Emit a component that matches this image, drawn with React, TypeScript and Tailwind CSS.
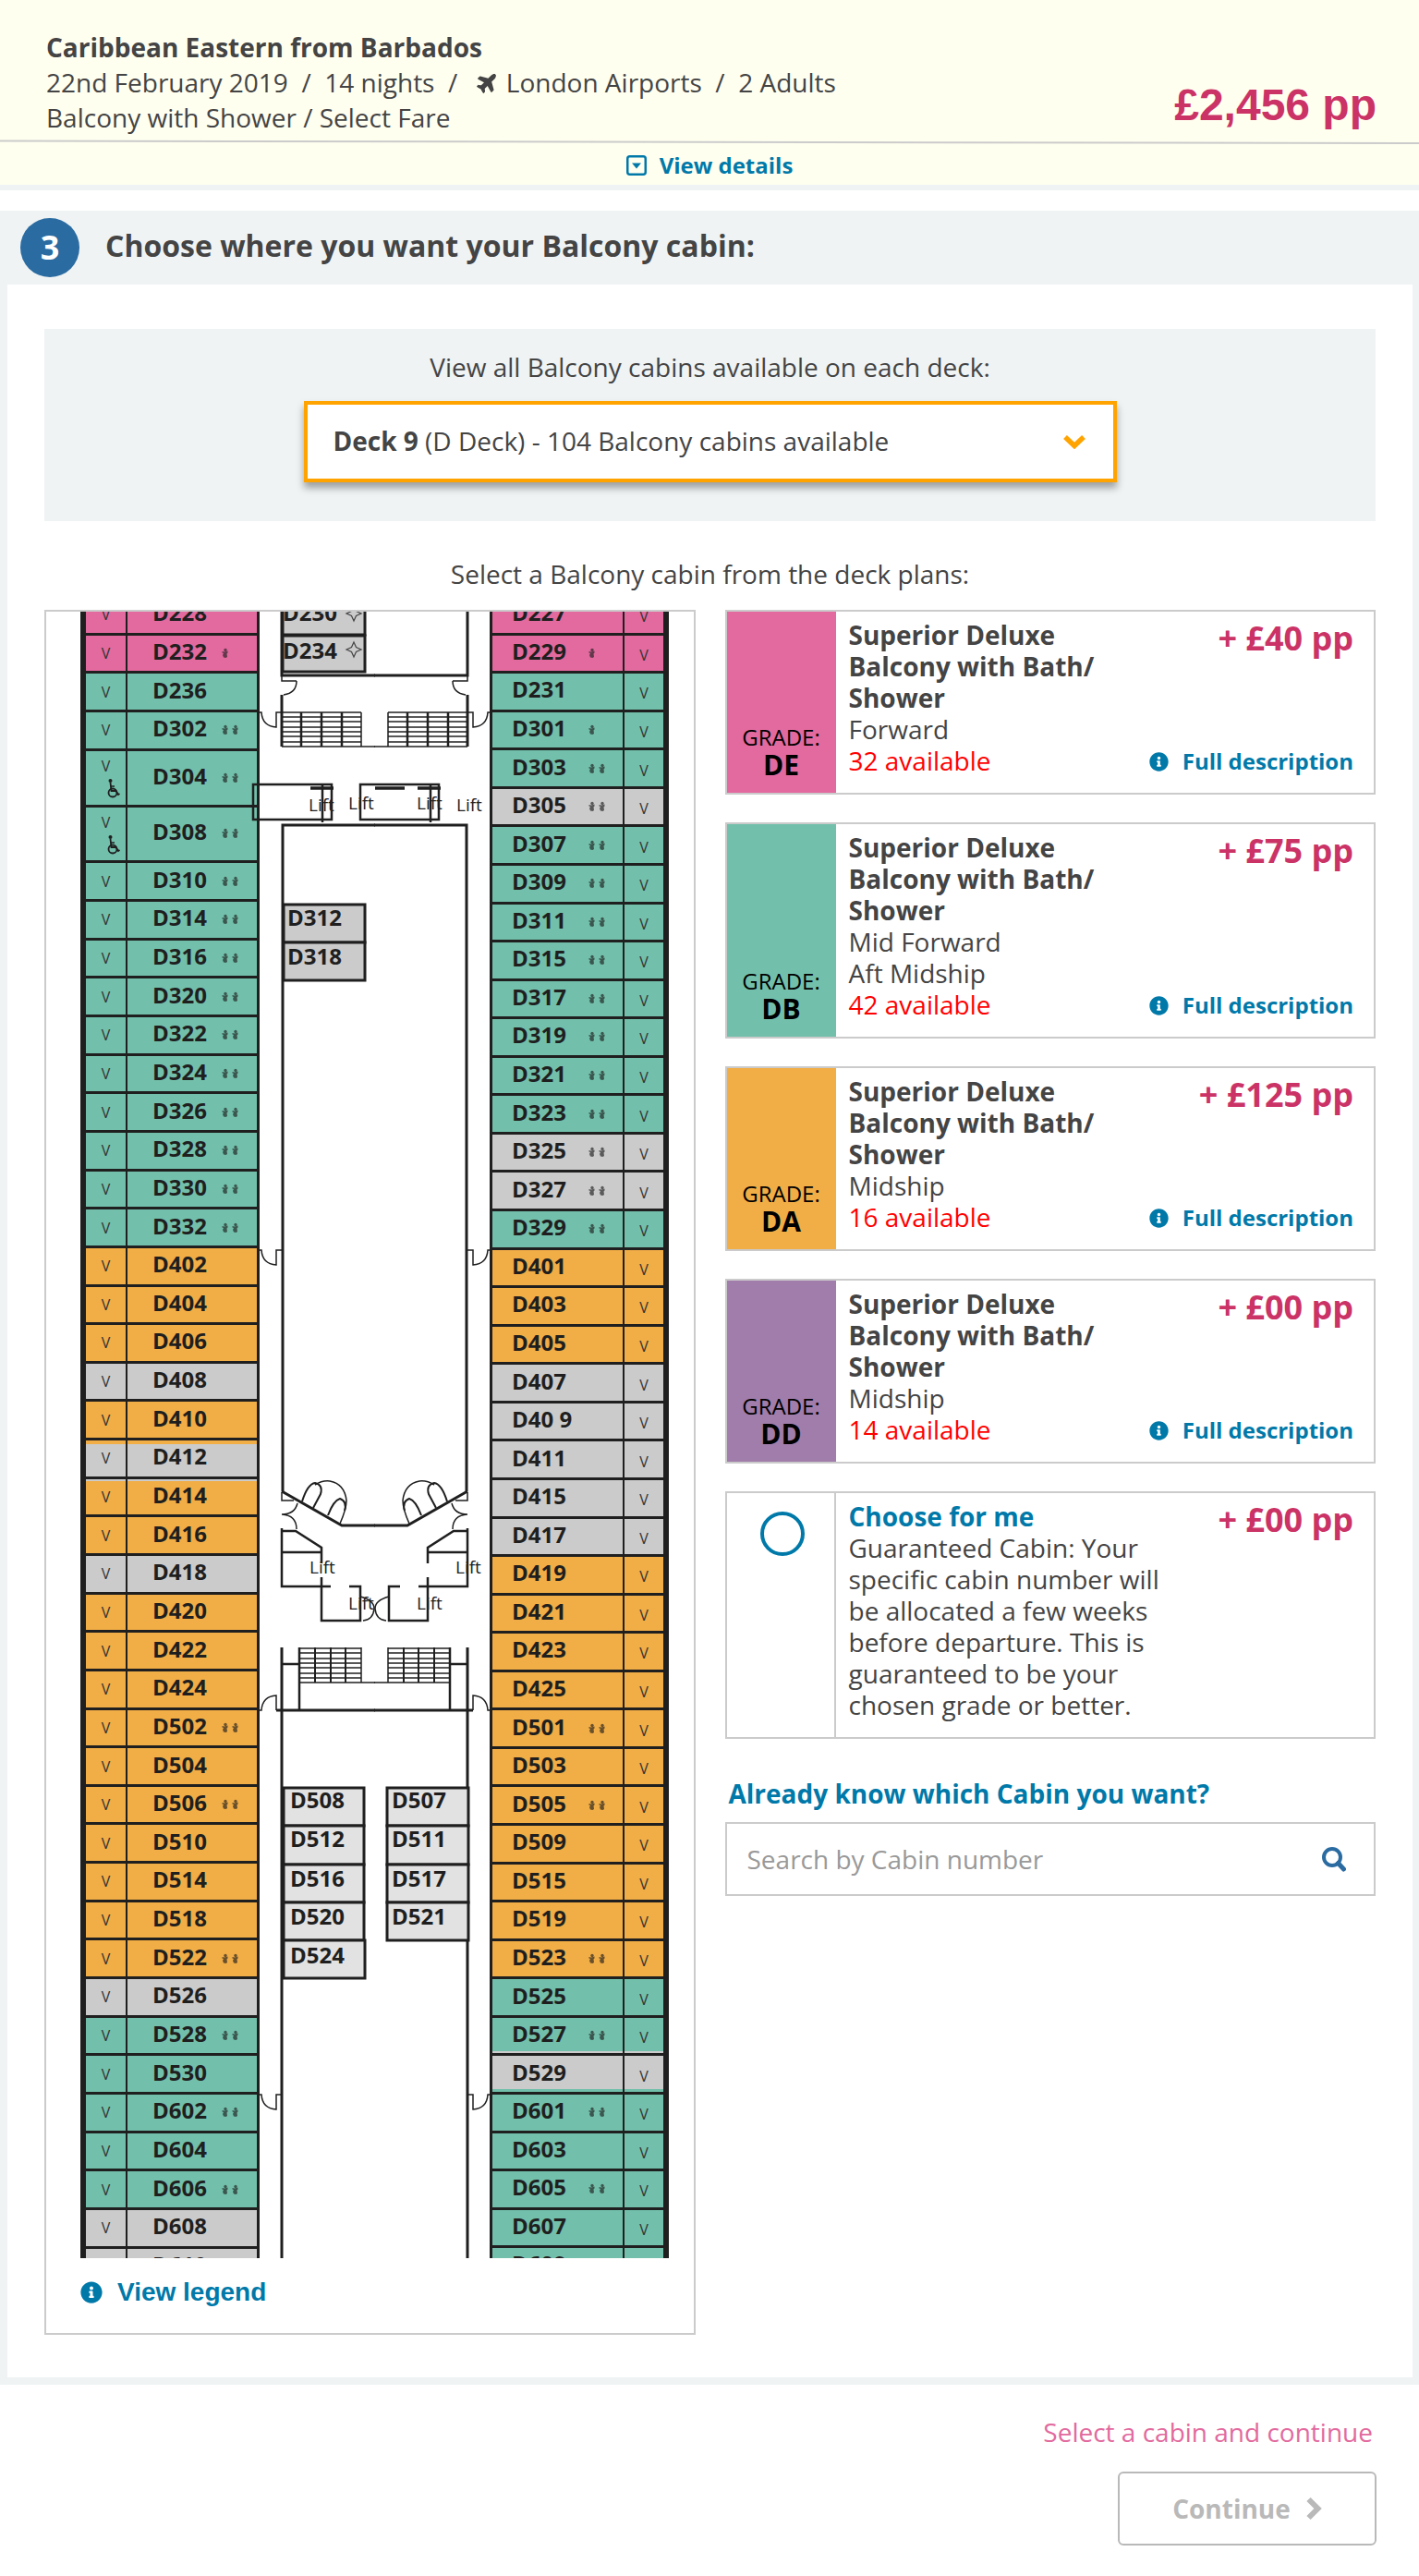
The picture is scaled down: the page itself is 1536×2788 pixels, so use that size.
import React from "react";
import { FaInfoCircle, FaPlane } from "react-icons/fa";

type Tone = "pink" | "teal" | "orange" | "grey";

type Cabin = {
  name: string;
  tone: Tone;
  marks?: number;
  accessible?: boolean;
};

const toneClass: Record<Tone, string> = {
  pink: "bg-[#e26a9e]",
  teal: "bg-[#72c0ab]",
  orange: "bg-[#f1ad46]",
  grey: "bg-[#cbcbcb]",
};

/* Thin strips where a neighbouring grade's colour runs over the cabin line. */
const edgeClass: Record<string, string> = {
  D412: "shadow-[inset_0_4px_0_#f1ad46]",
  D414: "shadow-[inset_0_2px_0_#cbcbcb]",
  D527: "shadow-[inset_0_-2px_0_#cbcbcb]",
  D529: "shadow-[inset_0_-3px_0_#72c0ab]",
};

const c = (name: string, tone: Tone, marks = 0, accessible = false): Cabin => ({
  name,
  tone,
  marks,
  accessible,
});

const portCabins: Cabin[] = [
  c("D228", "pink"),
  c("D232", "pink", 1),
  c("D236", "teal"),
  c("D302", "teal", 2),
  c("D304", "teal", 2, true),
  c("D308", "teal", 2, true),
  c("D310", "teal", 2),
  c("D314", "teal", 2),
  c("D316", "teal", 2),
  c("D320", "teal", 2),
  c("D322", "teal", 2),
  c("D324", "teal", 2),
  c("D326", "teal", 2),
  c("D328", "teal", 2),
  c("D330", "teal", 2),
  c("D332", "teal", 2),
  c("D402", "orange"),
  c("D404", "orange"),
  c("D406", "orange"),
  c("D408", "grey"),
  c("D410", "orange"),
  c("D412", "grey"),
  c("D414", "orange"),
  c("D416", "orange"),
  c("D418", "grey"),
  c("D420", "orange"),
  c("D422", "orange"),
  c("D424", "orange"),
  c("D502", "orange", 2),
  c("D504", "orange"),
  c("D506", "orange", 2),
  c("D510", "orange"),
  c("D514", "orange"),
  c("D518", "orange"),
  c("D522", "orange", 2),
  c("D526", "grey"),
  c("D528", "teal", 2),
  c("D530", "teal"),
  c("D602", "teal", 2),
  c("D604", "teal"),
  c("D606", "teal", 2),
  c("D608", "grey"),
  c("D610", "grey", 2),
];

const starboardCabins: Cabin[] = [
  c("D227", "pink"),
  c("D229", "pink", 1),
  c("D231", "teal"),
  c("D301", "teal", 1),
  c("D303", "teal", 2),
  c("D305", "grey", 2),
  c("D307", "teal", 2),
  c("D309", "teal", 2),
  c("D311", "teal", 2),
  c("D315", "teal", 2),
  c("D317", "teal", 2),
  c("D319", "teal", 2),
  c("D321", "teal", 2),
  c("D323", "teal", 2),
  c("D325", "grey", 2),
  c("D327", "grey", 2),
  c("D329", "teal", 2),
  c("D401", "orange"),
  c("D403", "orange"),
  c("D405", "orange"),
  c("D407", "grey"),
  c("D40 9", "grey"),
  c("D411", "grey"),
  c("D415", "grey"),
  c("D417", "grey"),
  c("D419", "orange"),
  c("D421", "orange"),
  c("D423", "orange"),
  c("D425", "orange"),
  c("D501", "orange", 2),
  c("D503", "orange"),
  c("D505", "orange", 2),
  c("D509", "orange"),
  c("D515", "orange"),
  c("D519", "orange"),
  c("D523", "orange", 2),
  c("D525", "teal"),
  c("D527", "teal", 2),
  c("D529", "grey"),
  c("D601", "teal", 2),
  c("D603", "teal"),
  c("D605", "teal", 2),
  c("D607", "teal"),
  c("D609", "teal", 2),
];

/* Small berth symbols printed beside a cabin number. */
function Marks({ count }: { count: number }) {
  if (!count) return null;
  return (
    <svg width="20" height="12" viewBox="0 0 20 12" fill="#1f1f1f" opacity="0.65" aria-hidden="true">
      {Array.from({ length: count }, (_, i) => (
        <g key={i} transform={`translate(${i * 11} 0)`}>
          <circle cx="4" cy="2.5" r="1.7" />
          <path d="M0.5 4 L3 4.5 L6.5 3.5 L6.5 5.5 L5.5 6.5 L6 10 L4.5 11 L2 10.5 L1 8 L2 6 L0.5 5.5 Z" />
        </g>
      ))}
    </svg>
  );
}

/* Upright wheelchair symbol used on the accessible cabins. */
function AccessibleIcon() {
  return (
    <svg width="14" height="21" viewBox="0 0 14 21" fill="none" stroke="#1f1f1f" className="ml-4" aria-hidden="true">
      <circle cx="3.5" cy="2" r="2" fill="#1f1f1f" stroke="none" />
      <path d="M3.5 4 L4.5 13 H9.5 L12 17 L13.5 16" strokeWidth="1.8" />
      <path d="M4 8 H8" strokeWidth="1.5" />
      <circle cx="6" cy="15" r="4.5" strokeWidth="1.8" />
    </svg>
  );
}

function CabinName({ cabin, side }: { cabin: Cabin; side: "port" | "starboard" }) {
  return (
    <span className={side === "port" ? "flex flex-1 items-center pl-[27px]" : "flex flex-1 items-center pl-[21px]"}>
      <span className={side === "port" ? "w-[75px] pb-1 text-left" : "w-[83px] pb-1 text-left"}>{cabin.name}</span>
      <Marks count={cabin.marks ?? 0} />
    </span>
  );
}

function ViewCell({ cabin, side }: { cabin: Cabin; side: "port" | "starboard" }) {
  return (
    <span
      className={
        side === "port"
          ? "flex w-[45px] flex-col items-center justify-center gap-1 border-r-2 border-[#1f1f1f] text-base leading-5 font-normal text-[#333]"
          : "flex w-[44px] flex-col items-center justify-center border-l-2 border-[#1f1f1f] pt-1 text-base leading-5 font-normal text-[#333]"
      }
    >
      V
      {cabin.accessible && <AccessibleIcon />}
    </span>
  );
}

function CabinColumn({ cabins, side }: { cabins: Cabin[]; side: "port" | "starboard" }) {
  return (
    <div
      className={
        side === "port"
          ? "flex w-[194px] flex-col border-r-[3px] border-l-[6px] border-[#1f1f1f]"
          : "flex w-[194px] flex-col border-r-[6px] border-l-[3px] border-[#1f1f1f]"
      }
    >
      {cabins.map((cabin) => (
        <button
          key={cabin.name}
          type="button"
          className={`${cabin.accessible ? "grow-[1.5]" : "grow"} ${toneClass[cabin.tone]} ${edgeClass[cabin.name] ?? ""} flex min-h-0 basis-0 items-stretch border-b-[3px] border-[#1f1f1f] text-2xl leading-8 font-bold text-[#1f1f1f]`}
        >
          {side === "port" && <ViewCell cabin={cabin} side={side} />}
          <CabinName cabin={cabin} side={side} />
          {side === "starboard" && <ViewCell cabin={cabin} side={side} />}
        </button>
      ))}
    </div>
  );
}

/* Left half of the walls, doors, lifts and stairs; the right half mirrors it. */
function HalfWalls() {
  return (
    <g fill="none" stroke="#1f1f1f">
      <g strokeWidth="3">
        <path d="M305 662 V731 H406" />
        <path d="M305 752 V808" />
        <path d="M306 1614 V893 H406" />
        <path d="M305 1614 L370 1651 H406" />
        <path d="M305 1783 V2444" />
        <path d="M299 1851 H406" />
      </g>
      <g strokeWidth="2.5">
        <path d="M305 1657 H320 L348 1675 V1692" />
        <path d="M305 1654 V1717 H358 M305 1680 H348" />
        <path d="M348 1707 V1754 H390 V1717 H378" />
        <path d="M305 1801 H324 M324 1783 V1851" />
      </g>
      <g strokeWidth="1.5">
        <path d="M305 731 V737 H321 M321 737 Q321 750 307 752" />
        <path d="M305 808 H406" />
        <path d="M281 771 H283 Q284 786 299 787 V771 H305" />
        <path d="M281 1353 H283 Q284 1368 299 1369 V1353 H305" />
        <path d="M281 2267 H283 Q284 2282 299 2283 V2267 H305" />
        <path d="M281 1851 H283 Q284 1836 299 1835 V1851" />
        <path d="M305 1615 V1624 H318" />
        <path d="M322 1627 Q319 1639 305 1639 Q321 1640 321 1655" />
        <path d="M390 1728 Q405 1732 405 1741 Q404 1753 393 1754" />
        <path d="M324 1821 H406" />
        <path d="M327 1625 Q333 1606 341 1605 Q350 1607 347 1617 L339 1632" strokeWidth="2" />
        <path d="M341 1607 Q349 1602 357 1603 Q373 1606 375 1624 Q375 1633 368 1649" />
        <path d="M355 1640 Q361 1624 368 1622 Q376 1625 373 1635" strokeWidth="2" />
      </g>
      <g strokeWidth="1.5">
        {[771, 776, 781, 787, 792, 797, 803].map((y) => (
          <path key={y} d={`M305 ${y} H391`} />
        ))}
        {[1784, 1789, 1795, 1800, 1805, 1811, 1816].map((y) => (
          <path key={y} d={`M324 ${y} H391`} />
        ))}
      </g>
      <path d="M326 771 V808 M348 771 V808 M370 771 V808" strokeWidth="2.5" />
      <path d="M391 771 V808 M391 1783 V1821" strokeWidth="1.5" />
      <path d="M341 1783 V1821 M358 1783 V1821 M374 1783 V1821" strokeWidth="2" />
    </g>
  );
}

const insideCabins = [
  { name: "D230", x: 306, y: 645, w: 89, h: 42, tx: 306, ty: 672, fill: "#cbcbcb", star: 664 },
  { name: "D234", x: 306, y: 688, w: 89, h: 39, tx: 306, ty: 713, fill: "#cbcbcb", star: 703 },
  { name: "D312", x: 307, y: 979, w: 88, h: 41, tx: 311, ty: 1002, fill: "#cbcbcb" },
  { name: "D318", x: 307, y: 1020, w: 88, h: 41, tx: 311, ty: 1044, fill: "#cbcbcb" },
  { name: "D508", x: 307, y: 1935, w: 87, h: 41, tx: 314, ty: 1957, fill: "#e2e2e2" },
  { name: "D512", x: 307, y: 1976, w: 87, h: 42, tx: 314, ty: 1999, fill: "#e2e2e2" },
  { name: "D516", x: 307, y: 2018, w: 87, h: 41, tx: 314, ty: 2042, fill: "#e2e2e2" },
  { name: "D520", x: 307, y: 2059, w: 87, h: 41, tx: 314, ty: 2083, fill: "#e2e2e2" },
  { name: "D524", x: 307, y: 2100, w: 88, h: 41, tx: 314, ty: 2125, fill: "#e2e2e2" },
  { name: "D507", x: 419, y: 1935, w: 88, h: 41, tx: 424, ty: 1957, fill: "#e2e2e2" },
  { name: "D511", x: 419, y: 1976, w: 88, h: 42, tx: 424, ty: 1999, fill: "#e2e2e2" },
  { name: "D517", x: 419, y: 2018, w: 88, h: 41, tx: 424, ty: 2042, fill: "#e2e2e2" },
  { name: "D521", x: 419, y: 2059, w: 88, h: 41, tx: 424, ty: 2083, fill: "#e2e2e2" },
];

const liftLabels = [
  [334, 878],
  [377, 876],
  [451, 876],
  [494, 878],
  [335, 1703],
  [493, 1703],
  [377, 1742],
  [451, 1742],
];

function CentreOfShip() {
  return (
    <svg
      width="249"
      height="1782"
      viewBox="281 662 249 1782"
      className="shrink-0 overflow-visible"
      role="img"
      aria-label="Lifts, stairs and inside cabins"
    >
      <HalfWalls />
      <g transform="translate(811 0) scale(-1 1)">
        <HalfWalls />
      </g>
      <g fill="none" stroke="#1f1f1f" strokeWidth="2.5">
        <path d="M274 849 H359 V887 H274 Z M390 849 H475 V887 H390 Z" />
        <path d="M349 849 V890 M466 849 V890" />
        <path d="M336 853 H361 M406 853 H438 M452 853 H477" strokeWidth="3.5" />
      </g>
      {insideCabins.map((k) => (
        <g key={k.name}>
          <rect x={k.x} y={k.y} width={k.w} height={k.h} fill={k.fill} stroke="#1f1f1f" strokeWidth="3" />
          <text x={k.tx} y={k.ty} fontSize="24" fontWeight="700" fill="#1f1f1f">
            {k.name}
          </text>
          {k.star && (
            <path
              transform={`translate(383 ${k.star})`}
              d="M0 -8 L2.5 -2.5 L8 0 L2.5 2.5 L0 8 L-2.5 2.5 L-8 0 L-2.5 -2.5 Z"
              fill="none"
              stroke="#444"
              strokeWidth="1.2"
            />
          )}
        </g>
      ))}
      {liftLabels.map(([x, y]) => (
        <text key={`${x}-${y}`} x={x} y={y} fontSize="19" fill="#222">
          Lift
        </text>
      ))}
    </svg>
  );
}

function DeckPlan() {
  return (
    <div className="flex h-[1782px] w-[637px] overflow-hidden">
      <div className="-mt-4 flex h-[1829px] shrink-0">
        <CabinColumn cabins={portCabins} side="port" />
      </div>
      <CentreOfShip />
      <div className="-mt-4 flex h-[1829px] shrink-0">
        <CabinColumn cabins={starboardCabins} side="starboard" />
      </div>
    </div>
  );
}

const grades = [
  { code: "DE", colour: "bg-[#e26a9e]", areas: ["Forward"], left: 32, price: "+ £40 pp" },
  { code: "DB", colour: "bg-[#72c0ab]", areas: ["Mid Forward", "Aft Midship"], left: 42, price: "+ £75 pp" },
  { code: "DA", colour: "bg-[#f1ad46]", areas: ["Midship"], left: 16, price: "+ £125 pp" },
  { code: "DD", colour: "bg-[#a07dab]", areas: ["Midship"], left: 14, price: "+ £00 pp" },
];

function GradeCard({ grade }: { grade: (typeof grades)[number] }) {
  return (
    <article className="flex border-2 border-[#cbcbcb]">
      <div className={`${grade.colour} flex w-[118px] shrink-0 flex-col justify-end pb-[14px] text-center text-black`}>
        <span className="text-2xl leading-7">GRADE:</span>
        <span className="text-3xl leading-8 font-bold">{grade.code}</span>
      </div>
      <div className="flex flex-1 justify-between pt-2 pr-[22px] pb-[18px] pl-[14px]">
        <div className="w-[340px] leading-[34px]">
          <h3 className="font-bold">
            Superior Deluxe Balcony with Bath/
            <wbr />
            Shower
          </h3>
          {grade.areas.map((area) => (
            <p key={area}>{area}</p>
          ))}
          <p className="text-[#ff0000]">{grade.left} available</p>
        </div>
        <div className="-ml-32 flex flex-col items-end justify-between">
          <p className="text-4xl leading-[42px] font-bold text-[#cb3366]">{grade.price}</p>
          <a href="#description" className="flex items-center gap-[15px] text-2xl leading-8 font-bold text-[#0079a9]">
            <FaInfoCircle className="size-[21px]" aria-hidden="true" />
            Full description
          </a>
        </div>
      </div>
    </article>
  );
}

export default function App() {
  return (
    <div className="min-h-screen bg-white font-['Open_Sans',sans-serif] text-[28px] leading-[38px] text-[#444]">
      <header className="border-b-[6px] border-[#eff3f4] bg-[#fffff0]">
        <div className="flex items-end justify-between pt-8 pr-[46px] pl-[50px]">
          <div>
            <h1 className="font-bold">Caribbean Eastern from Barbados</h1>
            <p className="flex items-center whitespace-pre">
              {"22nd February 2019  /  14 nights  /  "}
              <FaPlane className="mr-2 ml-[6px] size-6 -rotate-45" aria-hidden="true" />
              {"London Airports  /  2 Adults"}
            </p>
            <p>Balcony with Shower / Select Fare</p>
          </div>
          <p className="font-['Liberation_Sans',sans-serif] text-5xl leading-[64px] font-bold text-[#cb3366]">£2,456 pp</p>
        </div>
        <svg className="mt-[5px] block h-[5px] w-full" viewBox="0 0 1536 5" preserveAspectRatio="none" aria-hidden="true">
          <path d="M0 1.5 L1536 4" stroke="#cbcbcb" strokeWidth="2" />
        </svg>
        <div className="flex justify-center pt-[7px] pb-[5px]">
          <a href="#details" className="flex items-center gap-[14px] text-2xl leading-8 font-bold text-[#0079a9]">
            <svg width="22" height="22" viewBox="0 0 22 22" aria-hidden="true">
              <rect x="1.25" y="1.25" width="19.5" height="19.5" rx="2.5" fill="none" stroke="currentColor" strokeWidth="2.5" />
              <path d="M6 8.5 H16 L11 14.5 Z" fill="currentColor" />
            </svg>
            View details
          </a>
        </div>
      </header>

      <main className="mt-[22px]">
        <div className="flex h-20 items-center gap-7 bg-[#eff3f4] pl-[22px]">
          <span className="flex size-16 items-center justify-center rounded-full bg-[#2a6ba1] text-4xl font-bold text-white">3</span>
          <h2 className="pb-1 text-[32px] leading-10 font-bold">Choose where you want your Balcony cabin:</h2>
        </div>

        <div className="border-r-[7px] border-b-8 border-l-8 border-[#eff3f4] px-10 pt-12 pb-[46px]">
          <section className="flex flex-col items-center bg-[#eff3f4] pt-[22px] pb-[42px]">
            <label htmlFor="deck">View all Balcony cabins available on each deck:</label>
            <div className="relative mt-[18px] flex h-[88px] w-[880px] max-w-full items-center justify-between border-4 border-[#ffa300] bg-white pr-[29px] pb-[2px] pl-7 shadow-[0_6px_8px_rgba(0,0,0,0.35)]">
              <span aria-hidden="true">
                <b>Deck 9</b> (D Deck) - 104 Balcony cabins available
              </span>
              <svg width="26" height="17" viewBox="0 0 26 17" aria-hidden="true">
                <path d="M3 4 L13 13.5 L23 4" fill="none" stroke="#ffa300" strokeWidth="5.5" />
              </svg>
              <select id="deck" className="absolute inset-0 h-full w-full cursor-pointer opacity-0">
                <option>Deck 9 (D Deck) - 104 Balcony cabins available</option>
              </select>
            </div>
          </section>

          <p className="mt-[38px] text-center">Select a Balcony cabin from the deck plans:</p>

          <div className="mt-5 grid grid-cols-2 items-start gap-8">
            <section className="border-2 border-[#cbcbcb] pb-[27px] pl-[37px]">
              <DeckPlan />
              <a
                href="#legend"
                className="mt-5 flex items-center gap-4 font-['Liberation_Sans',sans-serif] leading-[34px] font-bold text-[#0079a9]"
              >
                <FaInfoCircle className="size-6" aria-hidden="true" />
                View legend
              </a>
            </section>

            <section>
              <div className="flex flex-col gap-[30px]">
                {grades.map((grade) => (
                  <GradeCard key={grade.code} grade={grade} />
                ))}
                <article className="flex border-2 border-[#cbcbcb]">
                  <div className="flex w-[118px] shrink-0 justify-center border-r-2 border-[#cbcbcb] pt-5 pl-1">
                    <input
                      id="choose"
                      type="radio"
                      className="size-12 appearance-none rounded-full border-4 border-[#0079a9] checked:bg-[#0079a9]"
                    />
                  </div>
                  <div className="flex flex-1 justify-between pt-2 pr-[22px] pb-[18px] pl-[14px]">
                    <div className="w-[340px] leading-[34px]">
                      <label htmlFor="choose" className="block font-bold text-[#0079a9]">
                        Choose for me
                      </label>
                      <p>
                        Guaranteed Cabin: Your specific cabin number will be allocated a few weeks before departure. This is
                        guaranteed to be your chosen grade or better.
                      </p>
                    </div>
                    <p className="text-4xl leading-[42px] font-bold text-[#cb3366]">+ £00 pp</p>
                  </div>
                </article>
              </div>

              <label htmlFor="search" className="mt-10 block pl-1 font-bold text-[#0079a9]">
                Already know which Cabin you want?
              </label>
              <div className="mt-3 flex h-20 items-center border-2 border-[#cbcbcb] pr-[30px]">
                <input
                  id="search"
                  type="text"
                  placeholder="Search by Cabin number"
                  className="h-full min-w-0 flex-1 bg-transparent pl-[22px] outline-none placeholder:text-[#999]"
                />
                <button type="button" aria-label="Search" className="text-[#2a6ba1]">
                  <svg width="26" height="27" viewBox="0 0 26 27" fill="none" stroke="currentColor" aria-hidden="true">
                    <circle cx="11" cy="11" r="9" strokeWidth="4" />
                    <path d="M17.5 17.5 L23.5 24" strokeWidth="5" strokeLinecap="round" />
                  </svg>
                </button>
              </div>
            </section>
          </div>
        </div>
      </main>

      <footer className="flex flex-col items-end pt-8 pr-[46px] pb-6">
        <p className="pr-1 text-[#e26a9e]">Select a cabin and continue</p>
        <button
          type="button"
          disabled
          className="mt-6 flex h-20 w-[280px] items-center justify-center gap-4 rounded-md border-2 border-[#b9b9b9] font-bold text-[#b9b9b9]"
        >
          Continue
          <svg width="18" height="26" viewBox="0 0 18 26" aria-hidden="true">
            <path d="M3.5 3 L13.5 13 L3.5 23" fill="none" stroke="currentColor" strokeWidth="6" />
          </svg>
        </button>
      </footer>
    </div>
  );
}
